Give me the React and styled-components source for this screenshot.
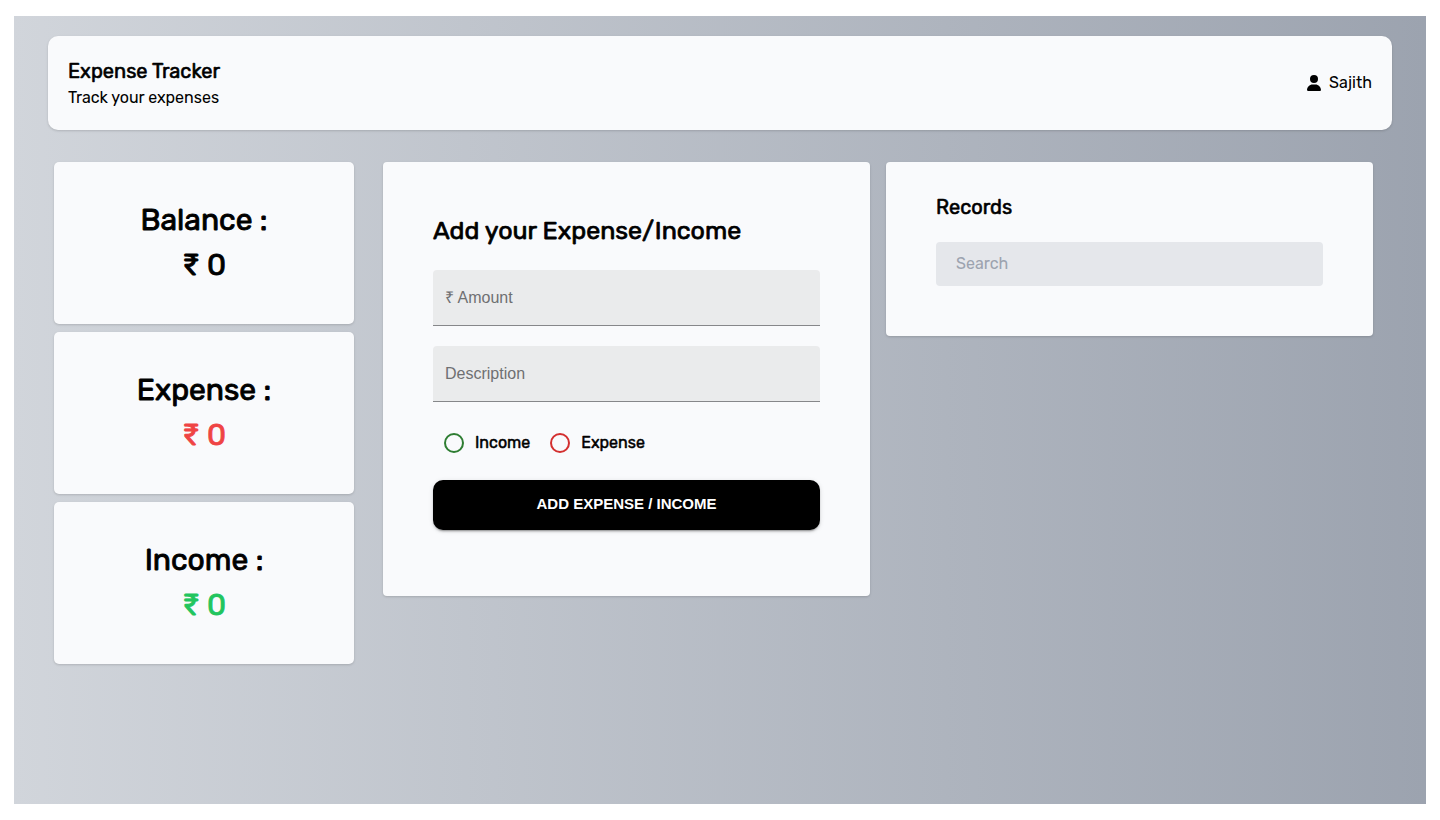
import React, { useState } from "react";
import styled, { createGlobalStyle, css } from "styled-components";
import { FaUser } from "react-icons/fa6";

const GlobalStyle = createGlobalStyle`
  *, *::before, *::after {
    box-sizing: border-box;
  }
  body {
    margin: 0;
    background: #ffffff;
    color: #000000;
    font-family: Rubik, Inter, "Liberation Sans", sans-serif;
    font-size: 16px;
    line-height: 24px;
  }
  h1, h2, p {
    margin: 0;
  }
`;

const emphasis = css`
  font-weight: 400;
  -webkit-text-stroke: 0.03em currentColor;
`;

const Page = styled.div`
  min-height: 100vh;
  padding: 16px 14px;
  display: flex;
`;

const Backdrop = styled.div`
  flex: 1;
  padding: 20px 34px;
  background: linear-gradient(to right, #d1d5db, #9ca3af);
`;

const Surface = styled.section`
  background: #f9fafc;
  border-radius: 4px;
  box-shadow: 0 1px 3px rgba(0, 0, 0, 0.1), 0 1px 2px rgba(0, 0, 0, 0.06);
`;

const Header = styled(Surface).attrs({ as: "header" })`
  display: flex;
  align-items: center;
  justify-content: space-between;
  padding: 20px;
  border-radius: 10px;
`;

const Title = styled.h1`
  font-size: 20px;
  line-height: 30px;
  ${emphasis}
`;

const User = styled.div`
  display: flex;
  align-items: center;
  gap: 8px;
`;

const UserIcon = styled(FaUser)`
  width: 14px;
  height: 16px;
`;

const Columns = styled.main`
  display: grid;
  grid-template-columns: 300px 1fr;
  align-items: start;
  gap: 29px;
  padding: 32px 19px 0 6px;
`;

const Panels = styled.div`
  display: grid;
  grid-template-columns: 1fr 1fr;
  align-items: start;
  gap: 16px;
`;

const Stats = styled.div`
  display: grid;
  gap: 8px;
`;

const StatCard = styled(Surface)`
  padding: 36px;
  border-radius: 5px;
  text-align: center;
  font-size: 30px;
  line-height: 45px;
  ${emphasis}
`;

const StatName = styled.h2`
  font: inherit;
`;

const StatValue = styled.p`
  color: ${({ $color }) => $color};
  -webkit-text-stroke-color: ${({ $color }) => $color};
`;

const FormCard = styled(Surface)`
  padding: 50px 50px 66px;
`;

const FormTitle = styled.h2`
  font-size: 25px;
  line-height: 38px;
  ${emphasis}
`;

const Field = styled.input`
  display: block;
  width: 100%;
  height: 56px;
  margin-top: 20px;
  padding: 0 12px;
  border: 0;
  border-bottom: 1px solid #86878a;
  border-radius: 4px 4px 0 0;
  background: #eaebec;
  color: #000000;
  font: 400 16px "Liberation Sans", Arial, sans-serif;
  &::placeholder {
    color: #6f7072;
    opacity: 1;
  }
`;

const Choices = styled.div`
  display: flex;
  gap: 20px;
  height: 42px;
  margin: 20px 0 16px;
  padding-left: 11px;
`;

const Choice = styled.label`
  display: flex;
  align-items: center;
  gap: 11px;
  ${emphasis}
`;

const Radio = styled.input`
  appearance: none;
  width: 20px;
  height: 20px;
  margin: 0;
  border: 2px solid ${({ $color }) => $color};
  border-radius: 50%;
  &:checked {
    background: radial-gradient(${({ $color }) => $color} 5px, transparent 6px);
  }
`;

const Submit = styled.button`
  display: block;
  width: 100%;
  height: 50px;
  padding: 0 16px 4px;
  border: 0;
  border-radius: 10px;
  background: #000000;
  color: #ffffff;
  font: 700 15px "Liberation Sans", Arial, sans-serif;
  text-transform: uppercase;
  box-shadow: 0 3px 1px -2px rgba(0, 0, 0, 0.2), 0 2px 2px rgba(0, 0, 0, 0.14),
    0 1px 5px rgba(0, 0, 0, 0.12);
`;

const RecordsCard = styled(Surface)`
  padding: 30px 50px 50px;
`;

const RecordsTitle = styled.h2`
  font-size: 20px;
  line-height: 30px;
  ${emphasis}
`;

const Search = styled.input`
  display: block;
  width: 100%;
  height: 44px;
  margin-top: 20px;
  padding: 0 20px 2px;
  border: 0;
  border-radius: 4px;
  background: #e5e7eb;
  color: #000000;
  font: inherit;
  &::placeholder {
    color: #9ca3af;
    opacity: 1;
  }
`;

const stats = [
  { name: "Balance", color: "#000000" },
  { name: "Expense", color: "#ef4444" },
  { name: "Income", color: "#22c55e" },
];

const kinds = [
  { name: "Income", color: "#2e7d32" },
  { name: "Expense", color: "#d32f2f" },
];

export default function App() {
  const [kind, setKind] = useState("");

  return (
    <>
      <GlobalStyle />
      <Page>
        <Backdrop>
          <Header>
            <div>
              <Title>Expense Tracker</Title>
              <p>Track your expenses</p>
            </div>
            <User>
              <UserIcon aria-hidden="true" />
              <span>Sajith</span>
            </User>
          </Header>

          <Columns>
            <Stats>
              {stats.map(({ name, color }) => (
                <StatCard key={name}>
                  <StatName>{name} :</StatName>
                  <StatValue $color={color}>₹ 0</StatValue>
                </StatCard>
              ))}
            </Stats>

            <Panels>
              <FormCard>
                <FormTitle>Add your Expense/Income</FormTitle>
                <form onSubmit={(event) => event.preventDefault()}>
                  <Field aria-label="Amount" placeholder="₹ Amount" inputMode="decimal" />
                  <Field aria-label="Description" placeholder="Description" />
                  <Choices role="radiogroup" aria-label="Type">
                    {kinds.map(({ name, color }) => (
                      <Choice key={name}>
                        <Radio
                          type="radio"
                          name="kind"
                          value={name}
                          checked={kind === name}
                          onChange={() => setKind(name)}
                          $color={color}
                        />
                        {name}
                      </Choice>
                    ))}
                  </Choices>
                  <Submit type="submit">Add Expense / Income</Submit>
                </form>
              </FormCard>

              <RecordsCard>
                <RecordsTitle>Records</RecordsTitle>
                <Search type="search" aria-label="Search" placeholder="Search" />
              </RecordsCard>
            </Panels>
          </Columns>
        </Backdrop>
      </Page>
    </>
  );
}
